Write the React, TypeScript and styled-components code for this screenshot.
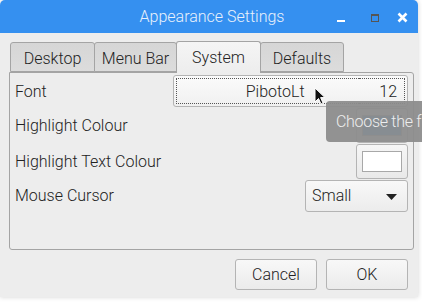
import React from "react";
import styled, { createGlobalStyle } from "styled-components";

const GlobalStyle = createGlobalStyle`
  html, body {
    margin: 0;
    padding: 0;
    background: #ffffff;
    font-family: Roboto, "Liberation Sans", sans-serif;
    font-weight: 300;
  }
`;

const tabs = [
  { label: "Desktop", width: 85 },
  { label: "Menu Bar", width: 83 },
  { label: "System", width: 85, active: true },
  { label: "Defaults", width: 84 },
];

const App: React.FC = () => {
  return (
    <Screen>
      <GlobalStyle />
      <Window>
        <TitleBar>
          <Title>Appearance Settings</Title>
          <Controls>
            <Minimize />
            <Maximize />
            <CloseIcon width="11" height="11" viewBox="0 0 11 11">
              <path d="M1.5 1.5 L9.5 9.5 M9.5 1.5 L1.5 9.5" stroke="#fff" strokeWidth="2.6" />
            </CloseIcon>
          </Controls>
        </TitleBar>

        <TabBar>
          {tabs.map((t) => (
            <Tab key={t.label} $active={!!t.active} $width={t.width}>
              {t.label}
            </Tab>
          ))}
        </TabBar>

        <Panel>
          <Grid>
            <Label>Font</Label>
            <FontButton>
              <FontName>PibotoLt</FontName>
              <FontSize>12</FontSize>
            </FontButton>

            <Label>Highlight Colour</Label>
            <ColourButton>
              <Swatch $colour="#3a92ef" />
            </ColourButton>

            <Label>Highlight Text Colour</Label>
            <ColourButton>
              <Swatch $colour="#ffffff" />
            </ColourButton>

            <Label>Mouse Cursor</Label>
            <Select>
              Small
              <Arrow width="11" height="6" viewBox="0 0 11 6">
                <path d="M0 0 H11 L5.5 6 Z" fill="#222" />
              </Arrow>
            </Select>
          </Grid>
        </Panel>

        <Footer>
          <DialogButton>Cancel</DialogButton>
          <DialogButton>OK</DialogButton>
        </Footer>
      </Window>

      <Tooltip>Choose the f</Tooltip>
      <Cursor width="12" height="18" viewBox="0 0 12 18">
        <path d="M1 1 L1 15 L4.5 11.5 L7 17 L9 16 L6.6 10.6 L11 10.6 Z" fill="#111" stroke="#fff" strokeWidth="1" />
      </Cursor>
    </Screen>
  );
};

export default App;

const Screen = styled.div`
  position: relative;
  width: 422px;
  height: 303px;
  overflow: hidden;
`;

const Window = styled.div`
  width: 418px;
  height: 297px;
  background: #ededed;
  border-radius: 5px 5px 0 0;
  box-shadow: 0 0 5px rgba(0, 0, 0, 0.18);
  overflow: hidden;
  display: flex;
  flex-direction: column;
`;

const TitleBar = styled.div`
  height: 33px;
  background: #3590f0;
  display: flex;
  align-items: center;
  justify-content: center;
  position: relative;
  flex-shrink: 0;
`;

const Title = styled.div`
  color: #e9f1fb;
  font-size: 16px;
  margin-left: 6px;
`;

const Controls = styled.div`
  position: absolute;
  right: 10px;
  top: 0;
  height: 33px;
  display: flex;
  align-items: center;
`;

const Minimize = styled.div`
  width: 8px;
  height: 2px;
  background: #fff;
  margin-top: 9px;
  margin-right: 26px;
`;

const Maximize = styled.div`
  width: 6px;
  height: 5px;
  border: 1px solid #555;
  border-top-width: 2px;
  margin-right: 18px;
  margin-top: 2px;
`;

const CloseIcon = styled.svg`
  display: block;
  margin-top: 2px;
`;

const TabBar = styled.div`
  display: flex;
  align-items: flex-end;
  padding-left: 10px;
  margin-top: 8px;
  height: 31px;
  flex-shrink: 0;
`;

const Tab = styled.div<{ $active: boolean; $width: number }>`
  box-sizing: border-box;
  width: ${(p) => p.$width}px;
  height: ${(p) => (p.$active ? 32 : 30)}px;
  margin-bottom: ${(p) => (p.$active ? -1 : 0)}px;
  border: 1px solid #a4a4a4;
  border-bottom: ${(p) => (p.$active ? "none" : "1px solid #a4a4a4")};
  border-radius: 3px 3px 0 0;
  background: ${(p) =>
    p.$active
      ? "linear-gradient(#f5f5f5, #ededed)"
      : "linear-gradient(#d6d6d6, #dcdcdc)"};
  color: #222;
  font-size: 16px;
  display: flex;
  align-items: center;
  justify-content: center;
  padding-top: ${(p) => (p.$active ? 0 : 2)}px;
  position: relative;
  z-index: ${(p) => (p.$active ? 2 : 1)};
  margin-right: -1px;
`;

const Panel = styled.div`
  box-sizing: border-box;
  margin: 0 4px 0 9px;
  height: 178px;
  border: 1px solid #a4a4a4;
  border-radius: 0 3px 3px 3px;
  padding: 2px 5px 0 5px;
  flex-shrink: 0;
`;

const Grid = styled.div`
  display: grid;
  grid-template-columns: 1fr auto;
  grid-template-rows: 32px 36px 36px 33px;
  align-items: center;
`;

const Label = styled.div`
  font-size: 16px;
  color: #222;
`;

const FontButton = styled.div`
  box-sizing: border-box;
  width: 235px;
  height: 32px;
  border: 1px solid #b4b4b4;
  border-radius: 3px;
  background: linear-gradient(#fbfbfb, #f0f0f0);
  display: flex;
  align-items: center;
  padding: 2px;
  justify-self: end;
`;

const FontName = styled.div`
  flex: 1;
  height: 100%;
  box-sizing: border-box;
  border: 1px dotted #555;
  border-right: none;
  display: flex;
  align-items: center;
  justify-content: center;
  font-size: 16px;
  color: #222;
  padding-left: 14px;
`;

const FontSize = styled.div`
  height: 100%;
  box-sizing: border-box;
  border: 1px dotted #555;
  border-left: none;
  display: flex;
  align-items: center;
  padding: 0 7px 0 20px;
  font-size: 16px;
  color: #222;
`;

const ColourButton = styled.div`
  box-sizing: border-box;
  width: 52px;
  height: 35px;
  border: 1px solid #b4b4b4;
  border-radius: 3px;
  background: linear-gradient(#f6f6f6, #e9e9e9);
  display: flex;
  align-items: center;
  justify-content: center;
  justify-self: end;
`;

const Swatch = styled.div<{ $colour: string }>`
  width: 40px;
  height: 21px;
  box-sizing: border-box;
  border: 1px solid #a8a8a8;
  background: ${(p) => p.$colour};
`;

const Select = styled.div`
  box-sizing: border-box;
  width: 103px;
  height: 32px;
  border: 1px solid #b4b4b4;
  border-radius: 3px;
  background: linear-gradient(#f8f8f8, #ececec);
  display: flex;
  align-items: center;
  justify-content: space-between;
  padding: 0 10px 0 6px;
  font-size: 16px;
  color: #222;
  justify-self: end;
`;

const Arrow = styled.svg`
  display: block;
  margin-top: 2px;
`;

const Footer = styled.div`
  display: flex;
  justify-content: flex-end;
  gap: 9px;
  padding: 9px 10px 0 0;
`;

const DialogButton = styled.div`
  box-sizing: border-box;
  width: 82px;
  height: 31px;
  border: 1px solid #b4b4b4;
  border-radius: 3px;
  background: linear-gradient(#f8f8f8, #ebebeb);
  display: flex;
  align-items: center;
  justify-content: center;
  font-size: 16px;
  color: #222;
`;

const Tooltip = styled.div`
  position: absolute;
  left: 326px;
  right: 0;
  top: 101px;
  height: 41px;
  background: rgba(140, 140, 140, 0.94);
  border-radius: 4px 0 0 4px;
  color: #eeeeee;
  font-size: 16px;
  letter-spacing: -0.3px;
  display: flex;
  align-items: center;
  padding-left: 10px;
  white-space: nowrap;
`;

const Cursor = styled.svg`
  position: absolute;
  left: 314px;
  top: 87px;
`;
